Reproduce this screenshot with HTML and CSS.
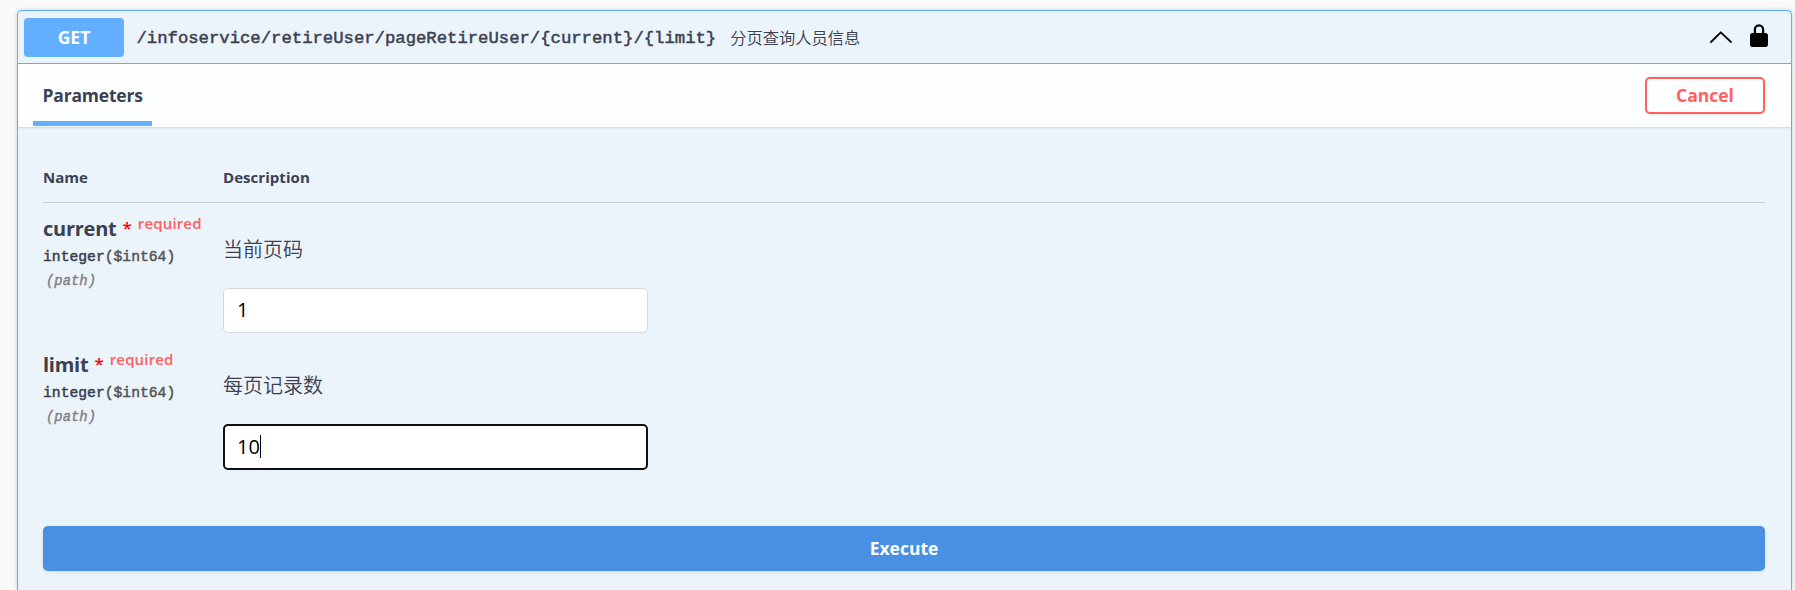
FILE: index.html
```
<!DOCTYPE html>
<html lang="zh-CN">
<head>
<meta charset="utf-8">
<title>API operation</title>
<link rel="stylesheet" href="styles.css">
</head>
<body>
<section class="opblock">
  <header class="summary">
    <span class="method">GET</span>
    <span class="path">/infoservice/retireUser/pageRetireUser/{current}/{limit}</span>
    <span class="summary-text">分页查询人员信息</span>
    <svg class="arrow" viewBox="0 0 22 12" width="22" height="12"><path d="M1 11 10.8 1.3 21 11" fill="none" stroke="#000" stroke-width="1.8" stroke-linecap="round" stroke-linejoin="round"/></svg>
    <svg class="lock" viewBox="0 0 18 23" width="18" height="23"><path d="M4.9 10V5.400a4.100 4.100 0 0 1 8.200 0V10" fill="none" stroke="#000" stroke-width="2.300"/><rect x="0" y="9" width="18" height="14" rx="2.800"/></svg>
  </header>
  <div class="section-header">
    <h4 class="tab">Parameters</h4>
    <button class="cancel">Cancel</button>
  </div>
  <div class="parameters">
    <div class="row head"><span class="name-head">Name</span><span class="desc-head">Description</span></div>
    <div class="row param">
      <div class="info">
        <div class="name"><span class="label">current</span><span class="star">*</span><span class="required">required</span></div>
        <div class="type">integer<span class="format">($int64)</span></div>
        <div class="in">(path)</div>
      </div>
      <div class="value"><p class="desc">当前页码</p><div class="field">1</div></div>
    </div>
    <div class="row param">
      <div class="info">
        <div class="name"><span class="label">limit</span><span class="star">*</span><span class="required">required</span></div>
        <div class="type">integer<span class="format">($int64)</span></div>
        <div class="in">(path)</div>
      </div>
      <div class="value"><p class="desc">每页记录数</p><div class="field focused">10<span class="caret"></span></div></div>
    </div>
  </div>
  <div class="execute-wrap"><button class="execute">Execute</button></div>
</section>
</body>
</html>
```
FILE: styles.css
```
* { box-sizing: border-box; }
body {
  margin: 0;
  height: 590px;
  overflow: hidden;
  padding: 10px 3px 0 17px;
  background: #fafafa;
  color: #3b4151;
  font-family: "Open Sans", "Noto Sans CJK SC", sans-serif;
}
.opblock {
  height: 580px;
  border: 1px solid #61affe;
  border-bottom: 0;
  border-radius: 5px 5px 0 0;
  background: #ebf3fb;
  box-shadow: 0 0 4px rgba(0, 0, 0, .19);
}
.summary {
  display: flex;
  align-items: center;
  height: 53px;
  padding: 0 23px 0 6px;
  border-bottom: 1px solid #61affe;
}
.method {
  width: 100px;
  height: 39px;
  border-radius: 4px;
  background: #61affe;
  color: #fff;
  font-size: 17.5px;
  font-weight: 700;
  line-height: 38px;
  text-align: center;
}
.path {
  margin-left: 12.500px;
  padding-top: 3px;
  font: 400 17.250px/24px "Liberation Mono", monospace;
  -webkit-text-stroke: .5px currentColor;
}
.summary-text {
  margin-left: 14px;
  font: 350 16.250px/24px "Noto Sans CJK SC", sans-serif;
}
.arrow { margin-left: auto; }
.lock { margin: -4px 0 0 18px; }
.section-header {
  display: flex;
  justify-content: space-between;
  align-items: flex-start;
  height: 63px;
  padding: 13px 26px 0 15px;
  background: rgba(255, 255, 255, .87);
  box-shadow: 0 1px 2px rgba(0, 0, 0, .13);
}
.tab {
  width: 119px;
  height: 49px;
  margin: 0;
  padding-left: 9.500px;
  border-bottom: 5px solid #61affe;
  font-size: 17.500px;
  font-weight: 700;
  letter-spacing: -.2px;
  line-height: 37px;
}
.cancel {
  width: 120px;
  height: 37px;
  padding: 0;
  border: 2px solid #ff6060;
  border-radius: 5px;
  background: transparent;
  box-shadow: 0 1px 2px rgba(0, 0, 0, .1);
  color: #ff6060;
  font: 700 17.500px/33px "Open Sans", sans-serif;
}
.parameters { padding: 25px 26px 0 25px; }
.row { display: grid; grid-template-columns: 180px 1fr; }
.head {
  height: 51px;
  border-bottom: 1px solid #c5cfdc;
  font-size: 15px;
  font-weight: 700;
  line-height: 50px;
}
.desc-head { letter-spacing: .05px; }
.param { height: 136px; }
.name { display: flex; height: 38px; padding-top: 8px; line-height: 36px; }
.label { font-size: 20px; font-weight: 700; letter-spacing: -.25px; }
.star { margin-left: 6px; color: #f00; font-size: 17px; font-weight: 600; line-height: 34px; }
.required {
  margin-left: 6px;
  color: #ff6060;
  font-size: 15px;
  font-weight: 600;
  letter-spacing: .15px;
  line-height: 24px;
}
.type {
  margin-top: 4px;
  font: 400 14.700px/24px "Liberation Mono", monospace;
  -webkit-text-stroke: .5px currentColor;
}
.format { color: #555; }
.in {
  padding: 1px 0 0 3px;
  color: #808080;
  font: italic 400 13.900px/22px "Liberation Mono", monospace;
  -webkit-text-stroke: .4px currentColor;
}
.desc { margin: 0; padding-top: 31px; height: 85px; font: 350 20px/30px "Noto Sans CJK SC", sans-serif; }
.field {
  display: flex;
  align-items: center;
  width: 425px;
  height: 45px;
  padding: 0 0 2px 13px;
  border: 1px solid #d9d9d9;
  border-radius: 5px;
  background: #fff;
  color: #000;
  font-size: 20px;
}
.focused { height: 46px; padding-left: 12px; border: 2px solid #101010; }
.caret { width: 1px; height: 23px; background: #000; }
.execute-wrap { padding: 51px 26px 0 25px; }
.execute {
  width: 100%;
  height: 45px;
  padding: 0;
  border: 0;
  border-radius: 5px;
  background: #4990e2;
  box-shadow: 0 1px 3px rgba(0, 0, 0, .12);
  color: #fff;
  font: 700 17.500px/45px "Open Sans", sans-serif;
}
```
